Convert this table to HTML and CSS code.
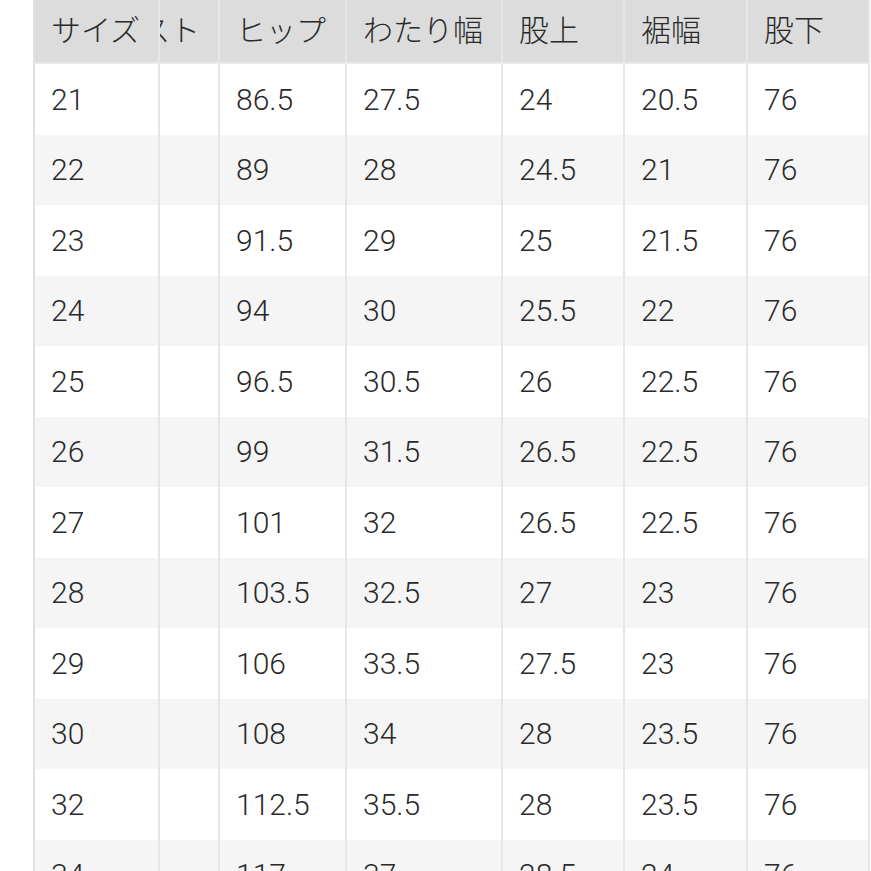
FILE: index.html
```html
<!DOCTYPE html>
<html lang="ja">
<head>
<meta charset="utf-8">
<title>サイズ表</title>
<link rel="stylesheet" href="styles.css">
</head>
<body>
<div class="page">
  <div class="scroller">
    <table class="size-table">
      <thead>
        <tr>
          <th class="c-size">サイズ</th>
          <th class="c-waist">ウエスト</th>
          <th class="c-hip">ヒップ</th>
          <th class="c-thigh">わたり幅</th>
          <th class="c-rise">股上</th>
          <th class="c-hem">裾幅</th>
          <th class="c-inseam">股下</th>
        </tr>
      </thead>
      <tbody>
        <tr><td class="c-size">21</td><td class="c-waist"></td><td>86.5</td><td>27.5</td><td>24</td><td>20.5</td><td>76</td></tr>
        <tr><td class="c-size">22</td><td class="c-waist"></td><td>89</td><td>28</td><td>24.5</td><td>21</td><td>76</td></tr>
        <tr><td class="c-size">23</td><td class="c-waist"></td><td>91.5</td><td>29</td><td>25</td><td>21.5</td><td>76</td></tr>
        <tr><td class="c-size">24</td><td class="c-waist"></td><td>94</td><td>30</td><td>25.5</td><td>22</td><td>76</td></tr>
        <tr><td class="c-size">25</td><td class="c-waist"></td><td>96.5</td><td>30.5</td><td>26</td><td>22.5</td><td>76</td></tr>
        <tr><td class="c-size">26</td><td class="c-waist"></td><td>99</td><td>31.5</td><td>26.5</td><td>22.5</td><td>76</td></tr>
        <tr><td class="c-size">27</td><td class="c-waist"></td><td>101</td><td>32</td><td>26.5</td><td>22.5</td><td>76</td></tr>
        <tr><td class="c-size">28</td><td class="c-waist"></td><td>103.5</td><td>32.5</td><td>27</td><td>23</td><td>76</td></tr>
        <tr><td class="c-size">29</td><td class="c-waist"></td><td>106</td><td>33.5</td><td>27.5</td><td>23</td><td>76</td></tr>
        <tr><td class="c-size">30</td><td class="c-waist"></td><td>108</td><td>34</td><td>28</td><td>23.5</td><td>76</td></tr>
        <tr><td class="c-size">32</td><td class="c-waist"></td><td>112.5</td><td>35.5</td><td>28</td><td>23.5</td><td>76</td></tr>
        <tr><td class="c-size">34</td><td class="c-waist"></td><td>117</td><td>37</td><td>28.5</td><td>24</td><td>76</td></tr>
      </tbody>
    </table>
  </div>
</div>
</body>
</html>
```

FILE: styles.css
```css
* { box-sizing: border-box; }

html, body {
  margin: 0;
  padding: 0;
  background: #ffffff;
}

body {
  font-family: Roboto, "Noto Sans CJK JP", sans-serif;
  color: #2a2a2a;
  overflow: hidden;
}

.page {
  padding: 0 1px 0 33px;
  height: 871px;
  overflow: hidden;
}

.scroller {
  overflow-x: auto;
  direction: rtl;
  scrollbar-width: none;
}
.scroller::-webkit-scrollbar { display: none; }

.size-table {
  direction: ltr;
  border-collapse: separate;
  border-spacing: 0;
  table-layout: fixed;
  width: 933px;
  font-size: 30px;
  font-weight: 300;
}

.size-table th,
.size-table td {
  text-align: left;
  white-space: nowrap;
  padding: 0 0 0 16px;
  border-right: 2px solid #e6e6e6;
  font-weight: 300;
}

.size-table th {
  background: #dcdcdc;
  height: 64px;
  padding-bottom: 7px;
  border-bottom: 2px solid #e9e9e9;
  vertical-align: middle;
}

.size-table td {
  height: 70.5px;
  background: #ffffff;
}

.size-table tbody tr:nth-child(even) td {
  background: #f5f5f5;
}

.size-table .c-size {
  position: sticky;
  left: 0;
  z-index: 1;
  width: 127px;
  border-left: 2px solid #e0e0e0;
}

.size-table .c-waist { width: 156px; }
.size-table .c-hip { width: 127px; }
.size-table .c-thigh { width: 156px; }
.size-table .c-rise { width: 122px; }
.size-table .c-hem { width: 123px; }
.size-table .c-inseam { width: 122px; }
```
